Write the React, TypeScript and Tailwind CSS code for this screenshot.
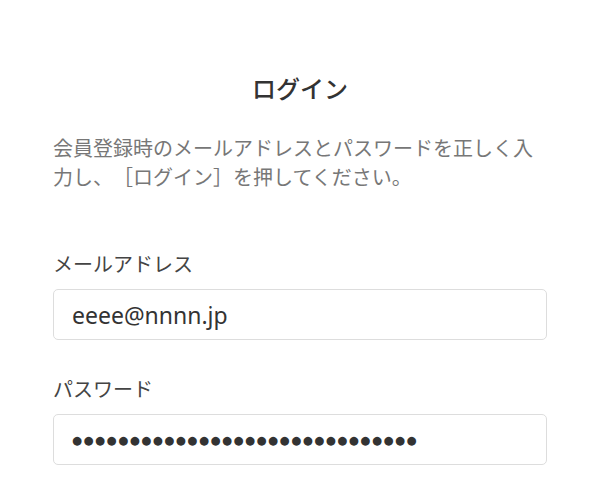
import React from "react";

export default function App() {
  const jp = { fontFamily: '"Noto Sans CJK JP", "Noto Sans", sans-serif' };
  return (
    <div className="w-[600px] h-[502px] bg-white overflow-hidden [text-spacing-trim:space-all]" style={jp}>
      <div className="px-[53px] pt-[70px]">
        <h1 className="text-center text-[24px] leading-[36px] font-medium text-[#333]">ログイン</h1>
        <p className="mt-[27px] text-[20px] leading-[29px] text-[#777]">
          会員登録時のメールアドレスとパスワードを正しく入力し、［ログイン］を押してください。
        </p>
        <div className="mt-[58px]">
          <label className="block text-[20px] leading-[30px] text-[#444]">メールアドレス</label>
          <input
            type="text"
            readOnly
            value="eeee@nnnn.jp"
            className="mt-[10px] block w-full h-[51px] rounded-[5px] border border-[#dddddd] px-[18px] text-[23px] text-[#333] outline-none"
            style={{ fontFamily: '"Noto Sans", sans-serif' }}
          />
        </div>
        <div className="mt-[34px]">
          <label className="block text-[20px] leading-[30px] text-[#444]">パスワード</label>
          <input
            type="text"
            readOnly
            value={"●".repeat(30)}
            className="mt-[10px] block w-full h-[51px] rounded-[5px] border border-[#dddddd] px-[18px] text-[11.5px] tracking-[1.5px] text-[#333] outline-none"
            style={{ fontFamily: '"DejaVu Sans", sans-serif' }}
          />
        </div>
      </div>
    </div>
  );
}
